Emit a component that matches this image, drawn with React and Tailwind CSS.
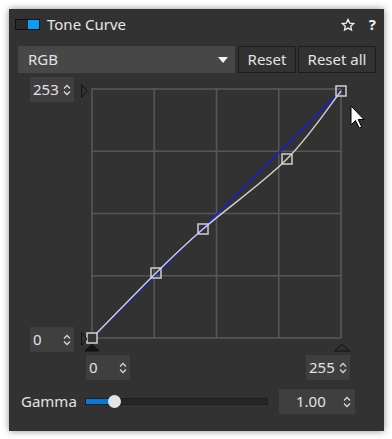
import React from "react";

const FONT = { fontFamily: '"Noto Sans", "Open Sans", Arial, sans-serif' };

const Chev = () => (
  <svg width="8" height="12" viewBox="0 0 8 12" className="shrink-0">
    <path d="M1 4.5 L4 1.5 L7 4.5 M1 7.5 L4 10.5 L7 7.5" fill="none" stroke="#d6d6d6" strokeWidth="1.3" />
  </svg>
);

function Spin({ value, className = "", textClass = "" }) {
  return (
    <div className={"h-[25px] bg-[#3f3f3f] flex items-center justify-between " + className}>
      <span className={"text-[15px] leading-none text-[#e2e2e2] " + textClass}>{value}</span>
      <Chev />
    </div>
  );
}

function Graph() {
  const curve =
    "M92 338 C102.7 327.2 137.5 291.2 156 273 C174.5 254.8 181.2 248 203 229 C224.8 210 264 182 287 159 C310 136 332 102.3 341 91";
  const pts = [
    [92, 338],
    [156, 273],
    [203, 229],
    [287, 159],
    [341, 91],
  ];
  const inner = [154.25, 216.5, 278.75];
  const innerY = [151.25, 213.5, 275.75];
  return (
    <svg width="290" height="275" viewBox="78 77 290 275" className="ml-[4px] shrink-0">
      {inner.map((x) => (
        <line key={"v" + x} x1={x} y1="89" x2={x} y2="338" stroke="#565656" strokeWidth="1.6" />
      ))}
      {innerY.map((y) => (
        <line key={"h" + y} x1="92" y1={y} x2="341" y2={y} stroke="#565656" strokeWidth="1.6" />
      ))}
      <rect x="92" y="89" width="249" height="249" fill="none" stroke="#6c6c6c" strokeWidth="1" />
      <line x1="92" y1="338" x2="341" y2="91" stroke="#1a1ae6" strokeWidth="1.4" />
      <path d={curve} fill="none" stroke="#d2d2d2" strokeWidth="1.4" />
      {pts.map(([x, y]) => (
        <rect key={x} x={x - 5} y={y - 5} width="10" height="10" fill={x === 92 ? "#333333" : "none"} stroke="#cfcfcf" strokeWidth="1.5" />
      ))}
      {x92line()}
      {/* left-side markers */}
      <path d="M81.5 84.5 L87 91 L81.5 97.5 Z" fill="none" stroke="#111" strokeWidth="1" />
      <path d="M81.5 332.5 L87 339 L81.5 345.5 Z" fill="none" stroke="#111" strokeWidth="1" />
      {/* bottom markers */}
      <path d="M92 344 L99 351 L85 351 Z" fill="#151515" stroke="#111" strokeWidth="1" />
      <path d="M342 344.5 L349.5 351 L334.5 351 Z" fill="none" stroke="#111" strokeWidth="1" />
      {/* cursor */}
      <path
        d="M351 106 L351 125 L355.5 120.5 L359.2 128 L361.7 127 L358.2 119.5 L364 119.5 Z"
        fill="#ffffff"
        stroke="#000"
        strokeWidth="1"
        strokeLinejoin="miter"
      />
    </svg>
  );
}

function x92line() {
  return null;
}

export default function App() {
  return (
    <div className="w-[392px] h-[439px] bg-white p-[9px]" style={FONT}>
      <div className="w-[375px] h-[422px] bg-[#323232] shadow-[0_0_7px_rgba(0,0,0,0.45)] flex flex-col">
        {/* header */}
        <div className="h-[31px] flex items-center pl-[6px] pr-[8px]">
          <div className="w-[25px] h-[11px] border border-[#111] bg-[#2a2a2a] flex justify-end">
            <div className="w-[11px] h-full bg-[#0a9cff]" />
          </div>
          <span className="ml-[7px] text-[15px] text-[#e8e8e8] leading-none">Tone Curve</span>
          <div className="flex-1" />
          <svg width="14" height="14" viewBox="0 0 24 24" className="mr-[14px]">
            <path
              d="M12 2.5 L14.9 8.8 L21.6 9.5 L16.6 14 L18 20.7 L12 17.3 L6 20.7 L7.4 14 L2.4 9.5 L9.1 8.8 Z"
              fill="none"
              stroke="#f0f0f0"
              strokeWidth="2.2"
              strokeLinejoin="miter"
            />
          </svg>
          <span className="text-[15px] font-bold text-[#f0f0f0] leading-none">?</span>
        </div>
        {/* controls */}
        <div className="mt-[6px] h-[27px] flex pl-[9px]">
          <div className="w-[217px] h-full bg-[#474747] flex items-center justify-between pl-[10px] pr-[7px]">
            <span className="text-[15px] text-[#e2e2e2] leading-none">RGB</span>
            <svg width="10" height="6" viewBox="0 0 10 6">
              <path d="M0 0 L10 0 L5 6 Z" fill="#f2f2f2" />
            </svg>
          </div>
          <div className="ml-[3px] w-[58px] h-full border border-[#1c1c1c] flex items-center justify-center text-[15px] text-[#e2e2e2] leading-none">
            Reset
          </div>
          <div className="ml-[2px] w-[78px] h-full border border-[#1c1c1c] flex items-center justify-center text-[15px] text-[#e2e2e2] leading-none">
            Reset all
          </div>
        </div>
        {/* graph */}
        <div className="mt-[4px] h-[275px] flex pl-[21px]">
          <div className="w-[44px] flex flex-col justify-between">
            <Spin value="253" className="pl-[3px] pr-[3px]" />
            <Spin value="0" className="pl-[3px] pr-[3px]" />
          </div>
          <Graph />
        </div>
        {/* input row */}
        <div className="mt-[3px] flex pl-[77px]">
          <Spin value="0" className="w-[44px] pl-[3px] pr-[3px]" />
          <Spin value="255" className="ml-[176px] w-[44px] pl-[3px] pr-[3px]" />
        </div>
        {/* gamma row */}
        <div className="mt-[9px] h-[25px] flex items-center pl-[12px]">
          <span className="w-[64px] text-[15px] text-[#e2e2e2] leading-none">Gamma</span>
          <div className="relative w-[183px] h-[7px] bg-[#262626] border border-[#1e1e1e]">
            <div className="h-full w-[24px] bg-[#0a78d7]" />
            <div className="absolute left-[22px] top-[-4px] w-[13px] h-[13px] rounded-full bg-[#e4e4ea]" />
          </div>
          <Spin value="1.00" className="ml-[11px] w-[76px] pl-[17px] pr-[4px]" />
        </div>
      </div>
    </div>
  );
}
